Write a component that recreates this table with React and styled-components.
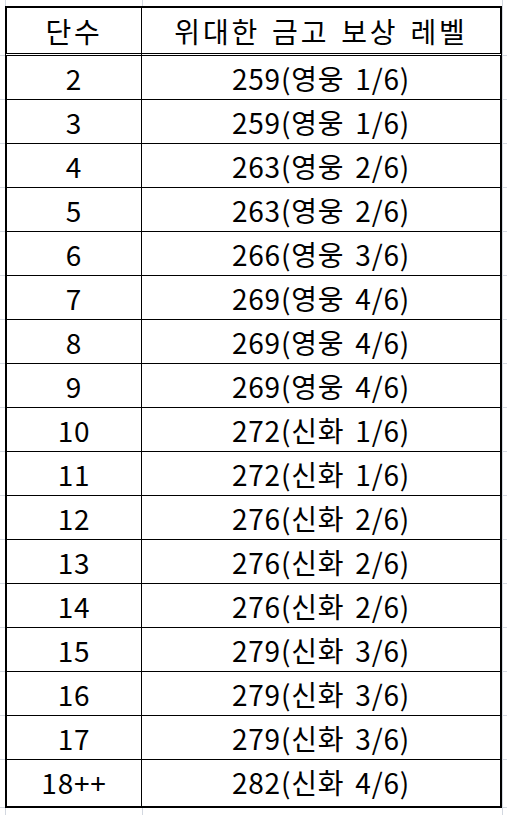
import React from "react";
import styled, { createGlobalStyle, css } from "styled-components";

const Global = createGlobalStyle`
  html, body { margin: 0; padding: 0; background: #ffffff; }
  body { font-family: "Noto Sans CJK KR", "Noto Sans", sans-serif; color: #000; }
`;

const GRID = "#d3d8e0";

const Sheet = styled.div`
  width: 507px;
  display: flex;
  flex-direction: column;
`;

const Row = styled.div`
  display: grid;
  grid-template-columns: 5px 137px 360px 5px;
  height: ${(p) => p.$h}px;
`;

const Gutter = styled.div`
  box-sizing: border-box;
  border-bottom: 1px solid ${GRID};
  border-left: ${(p) => (p.$right ? `1px solid ${GRID}` : "none")};
`;

const EdgeCell = styled.div`
  box-sizing: border-box;
  border-left: ${(p) => (p.$line ? `1px solid ${GRID}` : "none")};
`;

const Cell = styled.div`
  box-sizing: border-box;
  display: flex;
  align-items: center;
  justify-content: center;
  font-size: 28px;
  line-height: 1;
  letter-spacing: 0.8px;
  word-spacing: 4px;
  white-space: nowrap;
  border-bottom: 1px solid #000;
  ${(p) =>
    p.$first
      ? css`
          border-left: 2px solid #000;
          border-right: 1px solid #000;
        `
      : css`
          border-right: 2px solid #000;
        `}
  ${(p) =>
    p.$header &&
    css`
      border-top: 2px solid #000;
      border-bottom: 3px double #000;
      letter-spacing: 2.8px;
      word-spacing: 3px;
      padding-top: 1px;
    `}
  ${(p) =>
    p.$last &&
    css`
      border-bottom: 2px solid #000;
      padding-bottom: 2px;
    `}
`;

const rows = [
  ["2", "259(영웅 1/6)"],
  ["3", "259(영웅 1/6)"],
  ["4", "263(영웅 2/6)"],
  ["5", "263(영웅 2/6)"],
  ["6", "266(영웅 3/6)"],
  ["7", "269(영웅 4/6)"],
  ["8", "269(영웅 4/6)"],
  ["9", "269(영웅 4/6)"],
  ["10", "272(신화 1/6)"],
  ["11", "272(신화 1/6)"],
  ["12", "276(신화 2/6)"],
  ["13", "276(신화 2/6)"],
  ["14", "276(신화 2/6)"],
  ["15", "279(신화 3/6)"],
  ["16", "279(신화 3/6)"],
  ["17", "279(신화 3/6)"],
  ["18++", "282(신화 4/6)"],
];

export default function App() {
  return (
    <Sheet>
      <Global />
      <Row $h={6}>
        <EdgeCell />
        <EdgeCell $line />
        <EdgeCell $line />
        <EdgeCell $line />
      </Row>
      <Row $h={50}>
        <Gutter />
        <Cell $first $header>단수</Cell>
        <Cell $header>위대한 금고 보상 레벨</Cell>
        <Gutter $right />
      </Row>
      {rows.map(([n, v], i) => {
        const last = i === rows.length - 1;
        return (
          <Row key={n} $h={last ? 48 : 44}>
            <Gutter />
            <Cell $first $last={last}>{n}</Cell>
            <Cell $last={last}>{v}</Cell>
            <Gutter $right />
          </Row>
        );
      })}
      <Row $h={7}>
        <EdgeCell />
        <EdgeCell $line />
        <EdgeCell $line />
        <EdgeCell $line />
      </Row>
    </Sheet>
  );
}
